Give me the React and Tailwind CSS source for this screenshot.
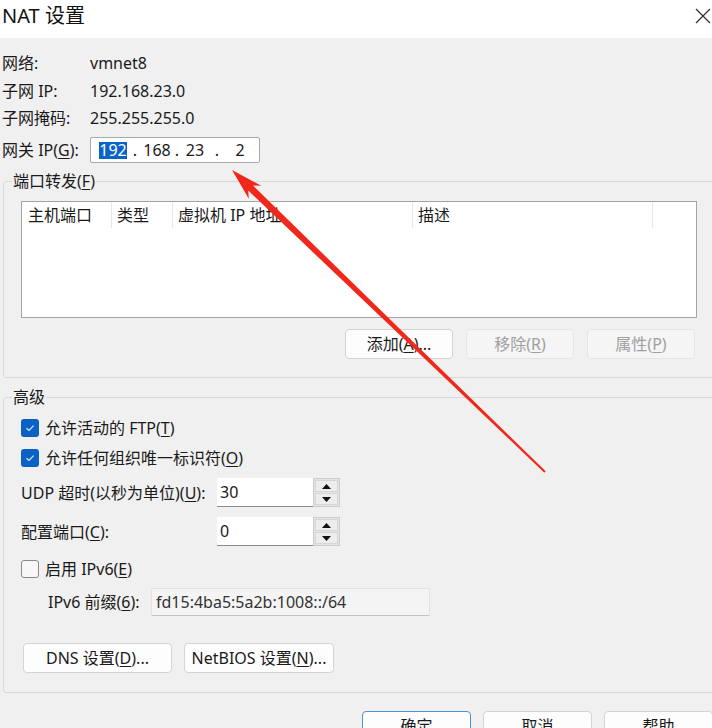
import React from 'react';

const U = ({ children }) => <u className="underline decoration-1 underline-offset-2">{children}</u>;

const Btn = ({ w = 'w-[108px]', disabled, primary, children }) => (
  <div
    className={`${w} h-[30px] shrink-0 flex items-center justify-center rounded-[4px] border ${
      disabled
        ? 'bg-[#f5f5f5] border-[#e6e6e6] text-[#a0a0a0]'
        : primary
        ? 'bg-[#fdfdfd] border-[#4a95d8] text-[#1a1a1a]'
        : 'bg-[#fdfdfd] border-[#d4d4d4] text-[#1a1a1a]'
    }`}
  >
    {children}
  </div>
);

const Check = ({ checked }) =>
  checked ? (
    <div className="w-[18px] h-[18px] rounded-[3px] bg-[#0b62c4] flex items-center justify-center">
      <svg width="10" height="8" viewBox="0 0 10 8">
        <path d="M1.5 4.2 L4 6.4 L8.6 1.6" fill="none" stroke="#dfeaf7" strokeWidth="1.2" />
      </svg>
    </div>
  ) : (
    <div className="w-[18px] h-[18px] rounded-[3px] border border-[#8a8a8a] bg-[#f7f7f7]" />
  );

const Spin = () => (
  <div className="w-[27px] h-[29px] flex flex-col gap-[1px] p-[1px] bg-[#e4e4e4] border border-[#cdcdcd]">
    <div className="flex-1 flex items-center justify-center bg-[#ededed] border border-[#d6d6d6]">
      <svg width="9" height="5" viewBox="0 0 9 5"><path d="M0 5 L4.5 0 L9 5 Z" fill="#111" /></svg>
    </div>
    <div className="flex-1 flex items-center justify-center bg-[#ededed] border border-[#d6d6d6]">
      <svg width="9" height="5" viewBox="0 0 9 5"><path d="M0 0 L9 0 L4.5 5 Z" fill="#111" /></svg>
    </div>
  </div>
);

const NumField = ({ value }) => (
  <div className="flex">
    <div className="w-[96px] h-[29px] bg-white border-b border-[#8c8c8c] pl-[3px] flex items-center leading-none">{value}</div>
    <Spin />
  </div>
);

const Group = ({ label, className, children }) => (
  <div className={`relative border border-[#d9d9d9] rounded-[3px] ml-[3px] mr-[-20px] ${className}`}>
    <div className="absolute left-[8px] top-[-12px] px-[1px] bg-[#f0f0f0] leading-[22px]">{label}</div>
    {children}
  </div>
);

export default function App() {
  return (
    <div className="relative w-[712px] h-[728px] overflow-hidden bg-[#f0f0f0] text-[#1a1a1a] text-[16px] font-['Noto_Sans','Noto_Sans_CJK_SC',sans-serif]">
      {/* title bar */}
      <div className="h-[38px] bg-white flex items-start justify-between pl-[2px]">
        <div className="text-[20px] leading-[28px] mt-[2px] text-[#111]">NAT 设置</div>
        <svg className="mt-[8px] mr-[1px]" width="16" height="16" viewBox="0 0 16 16">
          <path d="M1 1 L15 15 M15 1 L1 15" stroke="#333" strokeWidth="1.3" />
        </svg>
      </div>

      {/* info */}
      <div className="pl-[2px]">
        <div className="h-[28px] mt-[11px] flex items-center">
          <div className="w-[88px]">网络:</div>
          <div>vmnet8</div>
        </div>
        <div className="h-[27px] flex items-center">
          <div className="w-[88px]">子网 IP:</div>
          <div>192.168.23.0</div>
        </div>
        <div className="h-[28px] flex items-center">
          <div className="w-[88px]">子网掩码:</div>
          <div>255.255.255.0</div>
        </div>
        <div className="h-[26px] mt-[5px] flex items-center">
          <div className="w-[88px]">网关 IP(<U>G</U>):</div>
          <div className="w-[170px] h-[26px] bg-white border border-[#a8a8a8] rounded-[2px] flex items-center leading-none">
            <span className="ml-[8px] w-[28px] h-[17px] flex items-center justify-center bg-[#0a64c8] text-white">192</span>
            <span className="w-[16px] text-center">.</span>
            <span className="w-[28px] text-center">168</span>
            <span className="w-[12px] text-center">.</span>
            <span className="w-[24px] text-center">23</span>
            <span className="w-[20px] text-center">.</span>
            <span className="w-[26px] text-center">2</span>
          </div>
        </div>
      </div>

      {/* port forwarding */}
      <Group label={<>端口转发(<U>F</U>)</>} className="mt-[18px] h-[197px]">
        <div className="pt-[19px] pl-[17px]">
          <div className="w-[676px] h-[117px] bg-white border border-[#a4a4a4]">
            <div className="h-[26px] flex">
              <div className="w-[90px] pl-[6px] border-r border-[#e6e6e6] flex items-center">主机端口</div>
              <div className="w-[61px] pl-[5px] border-r border-[#e6e6e6] flex items-center">类型</div>
              <div className="w-[240px] pl-[5px] border-r border-[#e6e6e6] flex items-center">虚拟机 IP 地址</div>
              <div className="w-[240px] pl-[5px] border-r border-[#e6e6e6] flex items-center">描述</div>
            </div>
          </div>
          <div className="w-[676px] mt-[11px] pr-[2px] flex justify-end gap-[13px]">
            <Btn>添加(<U>A</U>)...</Btn>
            <Btn disabled>移除(<U>R</U>)</Btn>
            <Btn disabled>属性(<U>P</U>)</Btn>
          </div>
        </div>
      </Group>

      {/* advanced */}
      <Group label="高级" className="mt-[19px] h-[296px]">
        <div className="pt-[18px] pl-[17px]">
          <div className="h-[24px] flex items-center gap-[6px]">
            <Check checked />
            <span>允许活动的 FTP(<U>T</U>)</span>
          </div>
          <div className="h-[24px] mt-[6px] flex items-center gap-[6px]">
            <Check checked />
            <span>允许任何组织唯一标识符(<U>O</U>)</span>
          </div>
          <div className="mt-[8px] flex items-center">
            <div className="w-[196px]">UDP 超时(以秒为单位)(<U>U</U>):</div>
            <NumField value="30" />
          </div>
          <div className="mt-[10px] flex items-center">
            <div className="w-[196px]">配置端口(<U>C</U>):</div>
            <NumField value="0" />
          </div>
          <div className="h-[24px] mt-[11px] flex items-center gap-[6px]">
            <Check />
            <span>启用 IPv6(<U>E</U>)</span>
          </div>
          <div className="h-[28px] mt-[7px] pl-[27px] flex items-center">
            <div className="w-[103px]">IPv6 前缀(<U>6</U>):</div>
            <div className="w-[279px] h-[28px] bg-[#f4f4f4] border border-[#e2e2e2] border-b-[#c4c4c4] rounded-[2px] pl-[4px] flex items-center text-[#333]">
              fd15:4ba5:5a2b:1008::/64
            </div>
          </div>
          <div className="mt-[27px] ml-[2px] flex gap-[12px]">
            <Btn w="w-[149px]">DNS 设置(<U>D</U>)...</Btn>
            <Btn w="w-[150px]">NetBIOS 设置(<U>N</U>)...</Btn>
          </div>
        </div>
      </Group>

      {/* dialog buttons */}
      <div className="mt-[18px] ml-[362px] flex gap-[12px]">
        <Btn w="w-[109px]" primary>确定</Btn>
        <Btn w="w-[109px]">取消</Btn>
        <Btn w="w-[109px]">帮助</Btn>
      </div>

      {/* red annotation arrow */}
      <svg className="absolute inset-0 pointer-events-none" width="712" height="728" viewBox="0 0 712 728">
        <polygon
          points="232,170 261.2,185.7 253.1,185.6 545.7,471.3 544.3,472.7 248.3,190.6 248.8,198.7"
          fill="#f0281c"
        />
      </svg>
    </div>
  );
}
